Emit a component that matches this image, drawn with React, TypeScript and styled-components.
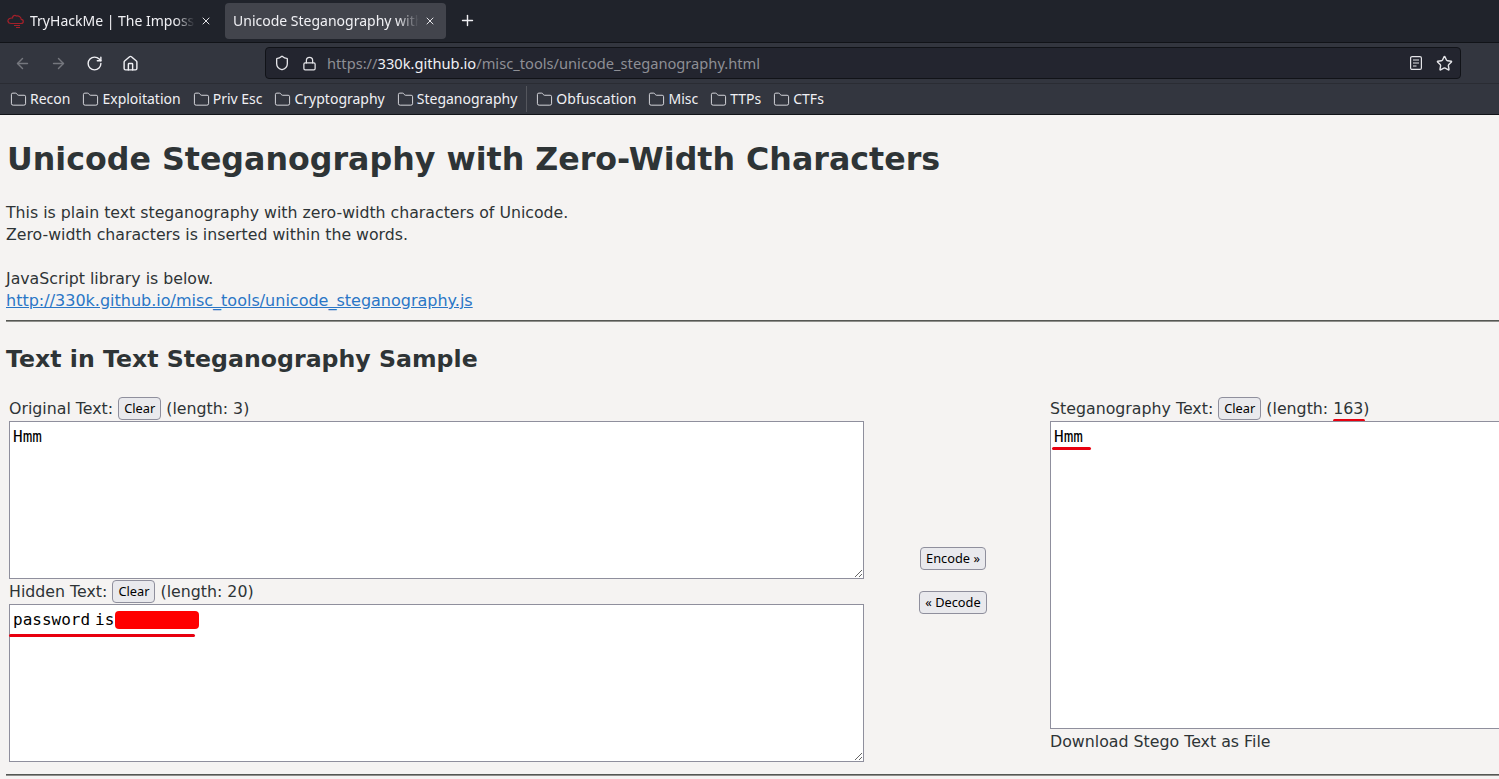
import styled, { createGlobalStyle } from "styled-components";
import { ArrowLeft, ArrowRight, Folder, Home, Lock, Plus, RotateCw, Shield, Star, X } from "lucide-react";

const LEFT_BOOKMARKS = ["Recon", "Exploitation", "Priv Esc", "Cryptography", "Steganography"];
const RIGHT_BOOKMARKS = ["Obfuscation", "Misc", "TTPs", "CTFs"];

function CloudIcon() {
  return (
    <svg width="18" height="18" viewBox="0 0 18 18" fill="none" stroke="#a3202a" strokeWidth="1.2">
      <path d="M4 11.5h10c3 0 3-4 .2-4.2C14 4.5 11.5 3.500 9.500 4 8 2.800 5.500 3.500 5.500 6 3 5.800 .5 7 1 9.500c.3 1.300 1.500 2 3 2z" />
      <path d="M7 13.500h6M9 15.500h4" />
    </svg>
  );
}

function ReaderIcon() {
  return (
    <svg width="14" height="16" viewBox="0 0 14 16" fill="none" stroke="#e4e4e8" strokeWidth="1.2">
      <rect x="1.600" y="1.600" width="10.800" height="12.800" rx="1.500" />
      <path d="M4 5h6M4 8h6M4 11h3.500" />
    </svg>
  );
}

function App() {
  return (
    <>
      <GlobalStyle />
      <TabBar>
        <Tab>
          <CloudIcon />
          <TabTitle>TryHackMe | The Impossible</TabTitle>
          <X size={12} color="#e4e4e8" />
        </Tab>
        <Tab $active>
          <TabTitle>Unicode Steganography with</TabTitle>
          <X size={12} color="#e4e4e8" />
        </Tab>
        <NewTab>
          <Plus size={17} color="#f0f0f4" />
        </NewTab>
      </TabBar>
      <NavBar>
        <NavButtons>
          <ArrowLeft size={17} color="#75777e" />
          <ArrowRight size={17} color="#75777e" />
          <RotateCw size={17} color="#f0f0f4" />
          <Home size={17} color="#f0f0f4" />
        </NavButtons>
        <UrlBar>
          <Shield size={16} color="#e4e4e8" />
          <Lock size={15} color="#e4e4e8" />
          <Url>
            https://<b>330k.github.io</b>/misc_tools/unicode_steganography.html
          </Url>
          <UrlActions>
            <ReaderIcon />
            <Star size={17} color="#e4e4e8" />
          </UrlActions>
        </UrlBar>
      </NavBar>
      <Bookmarks>
        {LEFT_BOOKMARKS.map((name) => (
          <Bookmark key={name}>
            <FolderIcon size={17} strokeWidth={1.2} />
            {name}
          </Bookmark>
        ))}
        <Separator />
        {RIGHT_BOOKMARKS.map((name) => (
          <Bookmark key={name}>
            <FolderIcon size={17} strokeWidth={1.2} />
            {name}
          </Bookmark>
        ))}
      </Bookmarks>
      <Page>
        <Title>Unicode Steganography with Zero-Width Characters</Title>
        <Intro>
          This is plain text steganography with zero-width characters of Unicode.
          <br />
          Zero-width characters is inserted within the words.
          <br />
          <br />
          JavaScript library is below.
          <br />
          <a href="#lib">http://330k.github.io/misc_tools/unicode_steganography.js</a>
        </Intro>
        <Rule />
        <Subtitle>Text in Text Steganography Sample</Subtitle>
        <Sample>
          <LeftColumn>
            <Field>
              <Label>
                Original Text: <SmallButton>Clear</SmallButton> (length: 3)
              </Label>
              <TextBox $height={158} readOnly value="Hmm" />
            </Field>
            <Field>
              <Label>
                Hidden Text: <SmallButton>Clear</SmallButton> (length: 20)
              </Label>
              <TextBoxWrap>
                <TextBox $height={158} readOnly value="password is" />
                <Redaction />
                <Underline $left={0} $top={30} $width={186} />
              </TextBoxWrap>
            </Field>
          </LeftColumn>
          <MiddleColumn>
            <SmallButton>Encode »</SmallButton>
            <SmallButton>« Decode</SmallButton>
          </MiddleColumn>
          <RightColumn>
            <Label>
              Steganography Text: <SmallButton>Clear</SmallButton> (length:{" "}
              <Marked>
                163
                <Underline $left={0} $top={21} $width={32} />
              </Marked>
              )
            </Label>
            <TextBoxWrap>
              <TextBox $height={308} readOnly value="Hmm" />
              <Underline $left={2} $top={26} $width={39} />
            </TextBoxWrap>
            <DownloadLine>Download Stego Text as File</DownloadLine>
          </RightColumn>
        </Sample>
        <BottomRule />
      </Page>
    </>
  );
}

const GlobalStyle = createGlobalStyle`
  html, body {
    margin: 0;
    height: 779px;
    overflow: hidden;
    background: #f5f3f2;
  }
  * {
    box-sizing: border-box;
  }
`;

const TabBar = styled.div`
  height: 43px;
  background: #20232b;
  border-bottom: 1px solid #111318;
  display: flex;
  align-items: center;
  padding: 0 0 1px 7px;
  font-family: "Noto Sans", sans-serif;
  font-size: 14px;
`;

const Tab = styled.div<{ $active?: boolean }>`
  width: ${({ $active }) => ($active ? "221px" : "215px")};
  height: 36px;
  margin-right: 3px;
  padding: 0 10px 0 ${({ $active }) => ($active ? "8px" : "0")};
  display: flex;
  align-items: center;
  gap: 5px;
  border-radius: 4px;
  color: #f0f0f4;
  background: ${({ $active }) => ($active ? "#42444c" : "transparent")};
`;

const TabTitle = styled.span`
  flex: 1;
  overflow: hidden;
  white-space: nowrap;
  mask-image: linear-gradient(to right, #000 88%, transparent 100%);
`;

const NewTab = styled.div`
  width: 36px;
  display: flex;
  justify-content: center;
`;

const NavBar = styled.div`
  height: 41px;
  background: #33363f;
  display: flex;
  align-items: center;
  padding-left: 14px;
  border-bottom: 1px solid #2a2c33;
`;

const NavButtons = styled.div`
  display: flex;
  align-items: center;
  gap: 19px;
  width: 251px;
`;

const UrlBar = styled.div`
  width: 1196px;
  height: 32px;
  background: #23252f;
  border: 1px solid #111318;
  border-radius: 4px;
  display: flex;
  align-items: center;
  gap: 12px;
  padding: 0 7px 0 8px;
`;

const Url = styled.span`
  flex: 1;
  margin-left: -2px;
  font-family: "Noto Sans", sans-serif;
  font-size: 14.67px;
  color: #8e8f95;
  b {
    font-weight: 400;
    color: #f0f0f4;
  }
`;

const UrlActions = styled.div`
  display: flex;
  align-items: center;
  gap: 13px;
`;

const Bookmarks = styled.div`
  height: 31px;
  background: #33363f;
  border-bottom: 1px solid #111318;
  display: flex;
  align-items: center;
  gap: 12px;
  padding: 0 0 2px 10px;
  font-family: "Noto Sans", sans-serif;
  font-size: 14px;
  color: #f0f0f4;
`;

const Bookmark = styled.span`
  display: flex;
  align-items: center;
  gap: 3px;
`;

const FolderIcon = styled(Folder)`
  margin-top: 2px;
`;

const Separator = styled.span`
  width: 1px;
  height: 26px;
  margin: 2px -3px 0;
  background: #54565d;
`;

const Page = styled.div`
  padding: 0 0 0 6px;
  font-family: "DejaVu Sans", sans-serif;
  font-size: 15.8px;
  line-height: 22px;
  color: #2e3436;
`;

const Title = styled.h1`
  margin: 0;
  padding: 24px 0 0 1px;
  font-size: 31.7px;
  line-height: 40px;
  font-weight: 700;
`;

const Intro = styled.p`
  margin: 23px 0 0;
  font-size: 15.75px;
  a {
    font-size: 16px;
    color: #2a76c6;
  }
`;

const Rule = styled.hr`
  margin: 8px 0 0;
  height: 2px;
  border: 0;
  border-top: 1px solid #555753;
  border-bottom: 1px solid #8f8f8c;
`;

const BottomRule = styled(Rule)`
  margin-top: 12px;
`;

const Subtitle = styled.h2`
  margin: 22px 0 0;
  font-size: 23.65px;
  line-height: 30px;
  font-weight: 700;
`;

const Sample = styled.div`
  display: flex;
  margin-top: 22px;
  padding-left: 3px;
  width: 1700px;
`;

const LeftColumn = styled.div`
  width: 855px;
  display: flex;
  flex-direction: column;
`;

const Field = styled.div`
  display: flex;
  flex-direction: column;
`;

const MiddleColumn = styled.div`
  width: 186px;
  display: flex;
  flex-direction: column;
  align-items: center;
  justify-content: center;
  gap: 21px;
  padding: 3px 8px 0 0;
`;

const RightColumn = styled.div`
  width: 600px;
  display: flex;
  flex-direction: column;
`;

const Label = styled.div`
  height: 25px;
  display: flex;
  align-items: center;
  white-space: pre;
`;

const SmallButton = styled.button`
  height: 23px;
  padding: 0 5px;
  border: 1px solid #8f8f9d;
  border-radius: 4px;
  background: #e9e9ed;
  font-family: "Noto Sans", sans-serif;
  font-size: 12.8px;
  color: #000;
  line-height: 1;
`;

const TextBoxWrap = styled.div`
  position: relative;
  display: flex;
`;

const TextBox = styled.textarea<{ $height: number }>`
  display: block;
  width: 100%;
  height: ${({ $height }) => $height}px;
  margin: 0;
  padding: 4px 3px;
  border: 1px solid #8f8f9d;
  background: #fff;
  color: #000;
  font-family: "DejaVu Sans Mono", monospace;
  font-size: 16px;
  line-height: 22px;
  word-spacing: -4.6px;
  outline: none;
`;

const Redaction = styled.div`
  position: absolute;
  left: 106px;
  top: 7px;
  width: 84px;
  height: 18px;
  border-radius: 4px;
  background: #f00;
`;

const Underline = styled.div<{ $left: number; $top: number; $width: number }>`
  position: absolute;
  left: ${({ $left }) => $left}px;
  top: ${({ $top }) => $top}px;
  width: ${({ $width }) => $width}px;
  height: 3px;
  border-radius: 2px;
  background: #e8000f;
`;

const Marked = styled.span`
  position: relative;
`;

const DownloadLine = styled.div`
  margin-top: 2px;
`;

export default App;
